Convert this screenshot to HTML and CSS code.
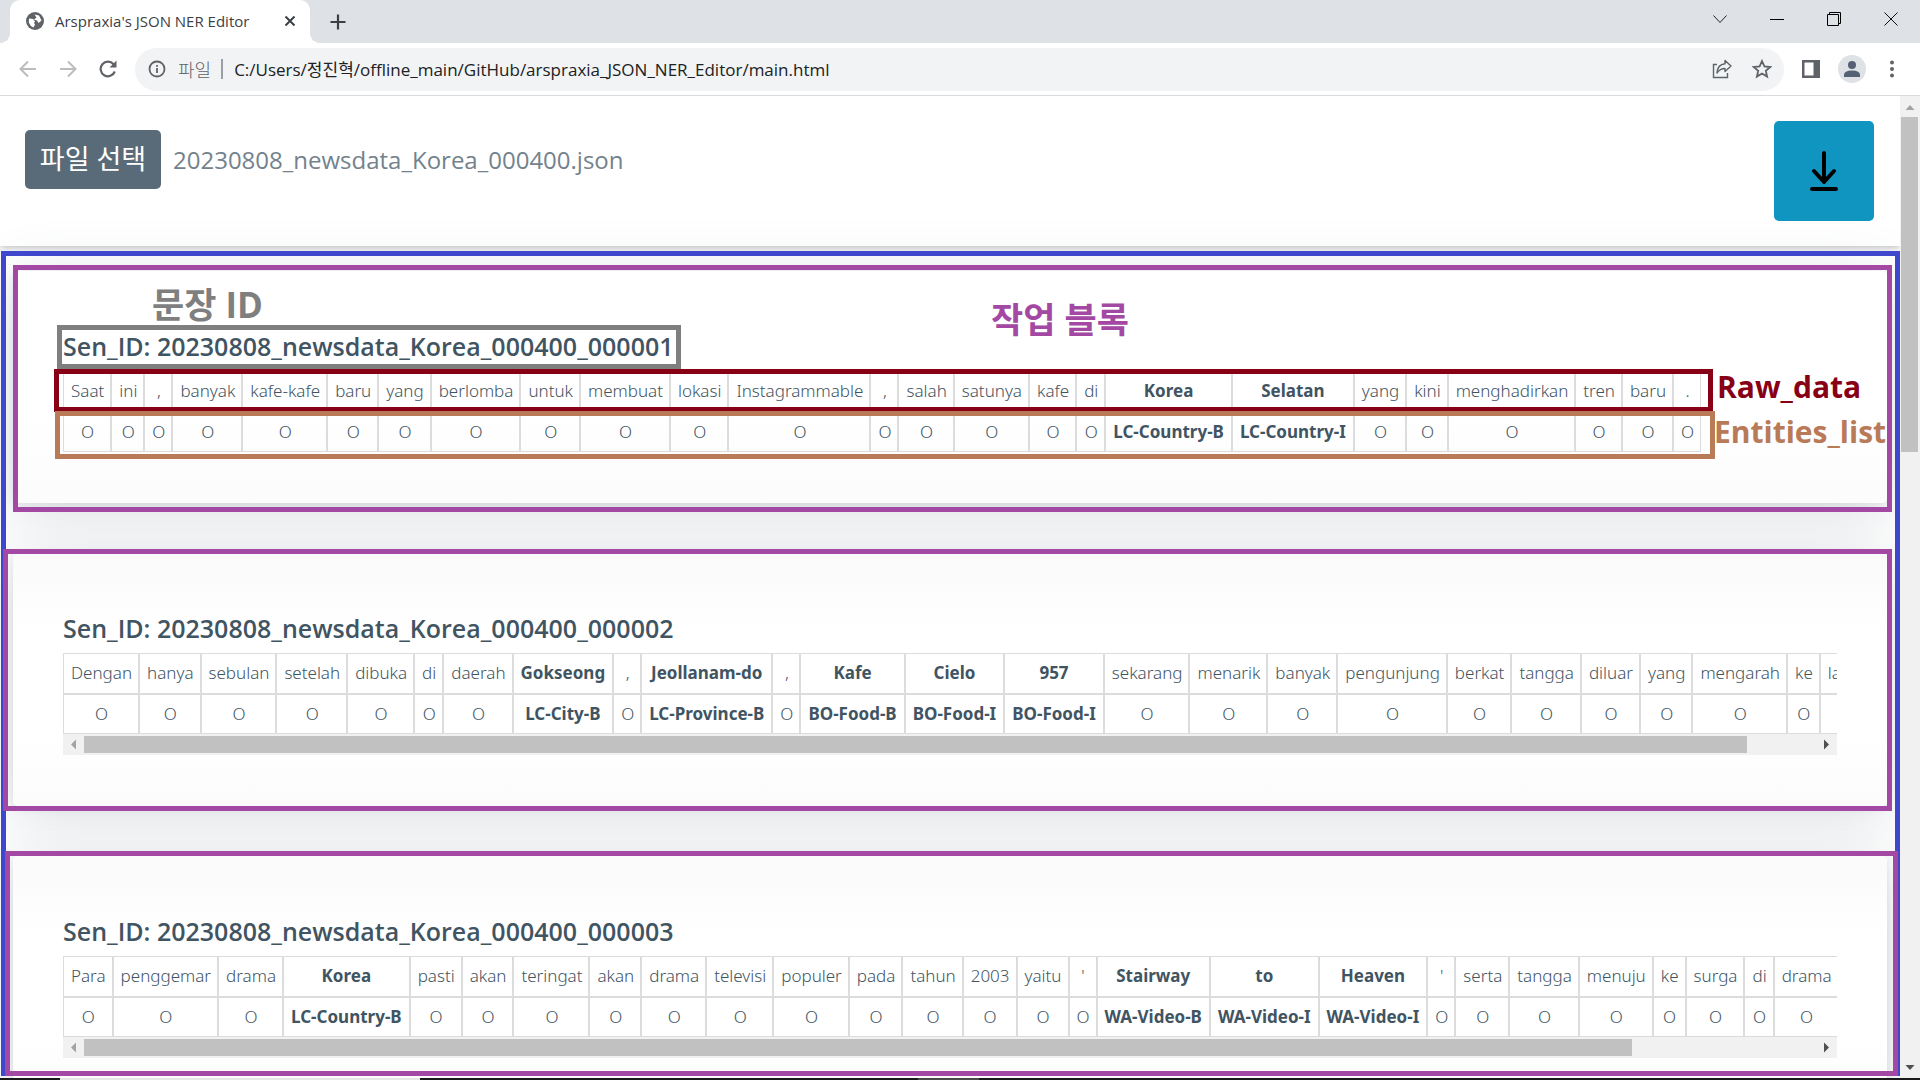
FILE: index.html
```html
<!DOCTYPE html>
<html lang="ko">
<head>
<meta charset="utf-8">
<title>Arspraxia's JSON NER Editor</title>
<link rel="stylesheet" href="styles.css">
</head>
<body>
<div class="tabstrip">
  <div class="tab">
    <svg class="globe" width="18" height="18" viewBox="0 0 18 18"><circle cx="9" cy="9" r="9" fill="#5f6368"/><path d="M3 6.500 L7 7 9 9.500 8 11 9 12.500 7.500 15.500 Q4 14 2.800 10.500Z M8.500 2.500 L13 3.500 15.500 8.500 12.500 11 11 8.500 8 7.500 10.500 5.500Z" fill="#fff"/></svg>
    <span class="tab-title">Arspraxia's JSON NER Editor</span>
    <button class="icon-btn" aria-label="Close tab"><svg width="12" height="12" viewBox="0 0 12 12"><path d="M1.500 1.500 L10.500 10.500 M10.500 1.500 L1.500 10.500" stroke="#3c4043" stroke-width="2" fill="none"/></svg></button>
  </div>
  <button class="icon-btn new-tab" aria-label="New tab"><svg width="16" height="16" viewBox="0 0 16 16"><path d="M8 0.500 V15.500 M0.500 8 H15.500" stroke="#3c4043" stroke-width="2.200"/></svg></button>
  <div class="window-controls">
    <button class="icon-btn" aria-label="Search tabs"><svg width="14" height="14" viewBox="0 0 14 14"><path d="M0.500 3.500 L7 10.500 13.500 3.500" stroke="#222" fill="none"/></svg></button>
    <button class="icon-btn" aria-label="Minimize"><svg width="14" height="14" viewBox="0 0 14 14"><path d="M0 7.500 H14" stroke="#000"/></svg></button>
    <button class="icon-btn" aria-label="Restore"><svg width="14" height="14" viewBox="0 0 14 14"><path d="M0.500 2.500 H11.500 V13.500 H0.500Z M2.500 2.500 V0.500 H13.500 V11.500 H11.500" stroke="#000" fill="none"/></svg></button>
    <button class="icon-btn" aria-label="Close"><svg width="14" height="14" viewBox="0 0 14 14"><path d="M0.500 0.500 L13.500 13.500 M13.500 0.500 L0.500 13.500" stroke="#111" fill="none"/></svg></button>
  </div>
</div>
<div class="toolbar">
  <div class="nav-buttons">
    <button class="icon-btn" aria-label="Back"><svg width="18" height="18" viewBox="0 0 18 18"><path d="M17 9 H2 M9 1.500 L1.500 9 9 16.500" stroke="#babcbe" stroke-width="2" fill="none"/></svg></button>
    <button class="icon-btn" aria-label="Forward"><svg width="18" height="18" viewBox="0 0 18 18"><path d="M1 9 H16 M9 1.500 L16.500 9 9 16.500" stroke="#babcbe" stroke-width="2" fill="none"/></svg></button>
    <button class="icon-btn" aria-label="Reload"><svg width="18" height="18" viewBox="0 0 18 18"><path d="M15.800 11.500 A7.300 7.300 0 1 1 14.600 4.300" stroke="#5f6368" stroke-width="2.200" fill="none"/><path d="M17.500 0.500 V7.500 H10.500Z" fill="#5f6368"/></svg></button>
  </div>
  <div class="omnibox">
    <svg width="18" height="18" viewBox="0 0 18 18"><circle cx="9" cy="9" r="7.500" stroke="#5f6368" stroke-width="1.800" fill="none"/><path d="M9 8 V13 M9 5 V6.800" stroke="#5f6368" stroke-width="1.800"/></svg>
    <span class="scheme">파일</span>
    <span class="divider"></span>
    <input class="url" aria-label="Address" value="C:/Users/정진혁/offline_main/GitHub/arspraxia_JSON_NER_Editor/main.html">
    <button class="icon-btn" aria-label="Share"><svg width="20" height="20" viewBox="0 0 20 20"><path d="M5 5.500 H1.500 V18.500 H15.500 V14" stroke="#5f6368" stroke-width="1.400" fill="none"/><path d="M13 1.500 L19 7 13 12.500 V9.500 Q8 9.500 5 14 Q5.500 5.500 13 4.800Z" stroke="#5f6368" stroke-width="1.400" fill="none" stroke-linejoin="round"/></svg></button>
    <button class="icon-btn" aria-label="Bookmark"><svg width="20" height="20" viewBox="0 0 20 20"><path d="M10 2 L12.400 7.400 18.200 8 13.800 11.800 15.100 17.600 10 14.500 4.900 17.600 6.200 11.800 1.800 8 7.600 7.400Z" stroke="#5f6368" stroke-width="1.800" fill="none"/></svg></button>
  </div>
  <div class="tool-buttons">
    <button class="icon-btn" aria-label="Side panel"><svg width="18" height="18" viewBox="0 0 18 18"><path d="M0 0 H18 V18 H0Z M2.500 2.500 V15.500 H11.500 V2.500Z" fill="#5f6368" fill-rule="evenodd"/></svg></button>
    <button class="icon-btn" aria-label="Profile"><svg width="28" height="28" viewBox="0 0 28 28"><circle cx="14" cy="14" r="14" fill="#dee1e6"/><circle cx="14" cy="10" r="4" fill="#566074"/><path d="M6 22 V20 Q6 15.500 14 15.500 T22 20 V22Z" fill="#566074"/></svg></button>
    <button class="icon-btn" aria-label="Menu"><svg width="4" height="18" viewBox="0 0 4 18"><circle cx="2" cy="2.500" r="2" fill="#5f6368"/><circle cx="2" cy="9" r="2" fill="#5f6368"/><circle cx="2" cy="15.500" r="2" fill="#5f6368"/></svg></button>
  </div>
</div>

<div class="viewport">
  <div class="page">
    <header class="page-header">
      <div class="file-row">
        <button class="file-btn">파일 선택</button>
        <span class="file-name">20230808_newsdata_Korea_000400.json</span>
      </div>
      <button class="download-btn" aria-label="Download"><svg width="28" height="40" viewBox="0 0 28 40"><path d="M14 2 V31 M4 20 L14 31 24 20 M2 38 H26" stroke="#000" stroke-width="4" fill="none" stroke-linecap="round" stroke-linejoin="round"/></svg></button>
    </header>
    <main class="blocks">
      <article class="card">
        <h2>Sen_ID: 20230808_newsdata_Korea_000400_000001</h2>
        <div class="scroller">
          <table>
            <tr><td>Saat</td><td>ini</td><td>,</td><td>banyak</td><td>kafe-kafe</td><td>baru</td><td>yang</td><td>berlomba</td><td>untuk</td><td>membuat</td><td>lokasi</td><td>Instagrammable</td><td>,</td><td>salah</td><td>satunya</td><td>kafe</td><td>di</td><th>Korea</th><th>Selatan</th><td>yang</td><td>kini</td><td>menghadirkan</td><td>tren</td><td>baru</td><td>.</td></tr>
            <tr><td>O</td><td>O</td><td>O</td><td>O</td><td>O</td><td>O</td><td>O</td><td>O</td><td>O</td><td>O</td><td>O</td><td>O</td><td>O</td><td>O</td><td>O</td><td>O</td><td>O</td><th>LC-Country-B</th><th>LC-Country-I</th><td>O</td><td>O</td><td>O</td><td>O</td><td>O</td><td>O</td></tr>
          </table>
        </div>
        <span class="note note-block">작업 블록</span>
        <span class="note note-id">문장 ID</span>
        <span class="note note-raw">Raw_data</span>
        <span class="note note-entities">Entities_list</span>
        <div class="frame frame-id"></div>
        <div class="frame frame-raw"></div>
        <div class="frame frame-entities"></div>
        <div class="frame frame-block first"></div>
      </article>
      <article class="card">
        <h2>Sen_ID: 20230808_newsdata_Korea_000400_000002</h2>
        <div class="scroller">
          <table>
            <tr><td>Dengan</td><td>hanya</td><td>sebulan</td><td>setelah</td><td>dibuka</td><td>di</td><td>daerah</td><th>Gokseong</th><td>,</td><th>Jeollanam-do</th><td>,</td><th>Kafe</th><th>Cielo</th><th>957</th><td>sekarang</td><td>menarik</td><td>banyak</td><td>pengunjung</td><td>berkat</td><td>tangga</td><td>diluar</td><td>yang</td><td>mengarah</td><td>ke</td><td>langit</td></tr>
            <tr><td>O</td><td>O</td><td>O</td><td>O</td><td>O</td><td>O</td><td>O</td><th>LC-City-B</th><td>O</td><th>LC-Province-B</th><td>O</td><th>BO-Food-B</th><th>BO-Food-I</th><th>BO-Food-I</th><td>O</td><td>O</td><td>O</td><td>O</td><td>O</td><td>O</td><td>O</td><td>O</td><td>O</td><td>O</td><td></td></tr>
          </table>
        </div>
        <div class="hscroll"><svg width="21" height="21" viewBox="0 0 21 21"><path d="M13 5.500 V15.500 L8 10.500Z" fill="#a3a3a3"/></svg><div class="track"><div class="thumb" style="width:96%"></div></div><svg width="21" height="21" viewBox="0 0 21 21"><path d="M8 5.500 V15.500 L13 10.500Z" fill="#505050"/></svg></div>
        <div class="frame frame-block second"></div>
      </article>
      <article class="card">
        <h2>Sen_ID: 20230808_newsdata_Korea_000400_000003</h2>
        <div class="scroller">
          <table>
            <tr><td>Para</td><td>penggemar</td><td>drama</td><th>Korea</th><td>pasti</td><td>akan</td><td>teringat</td><td>akan</td><td>drama</td><td>televisi</td><td>populer</td><td>pada</td><td>tahun</td><td>2003</td><td>yaitu</td><td>'</td><th>Stairway</th><th>to</th><th>Heaven</th><td>'</td><td>serta</td><td>tangga</td><td>menuju</td><td>ke</td><td>surga</td><td>di</td><td>drama</td></tr>
            <tr><td>O</td><td>O</td><td>O</td><th>LC-Country-B</th><td>O</td><td>O</td><td>O</td><td>O</td><td>O</td><td>O</td><td>O</td><td>O</td><td>O</td><td>O</td><td>O</td><td>O</td><th>WA-Video-B</th><th>WA-Video-I</th><th>WA-Video-I</th><td>O</td><td>O</td><td>O</td><td>O</td><td>O</td><td>O</td><td>O</td><td>O</td></tr>
          </table>
        </div>
        <div class="hscroll"><svg width="21" height="21" viewBox="0 0 21 21"><path d="M13 5.500 V15.500 L8 10.500Z" fill="#a3a3a3"/></svg><div class="track"><div class="thumb" style="width:89.400%"></div></div><svg width="21" height="21" viewBox="0 0 21 21"><path d="M8 5.500 V15.500 L13 10.500Z" fill="#505050"/></svg></div>
      </article>
    </main>
    <div class="frame frame-main"></div>
    <div class="frame frame-third"></div>
  </div>
  <div class="vscroll"><svg width="20" height="21" viewBox="0 0 20 21"><path d="M5.500 14 H14.500 L10 9Z" fill="#a3a3a3"/></svg><div class="track"><div class="thumb" style="height:35.600%"></div></div><svg width="20" height="21" viewBox="0 0 20 21"><path d="M5.500 8 H14.500 L10 13Z" fill="#505050"/></svg></div>
</div>
<div class="taskbar"><span class="task-active"></span><span class="task-open"></span></div>
</body>
</html>
```
FILE: styles.css
```css
* { box-sizing: border-box; }

body {
  margin: 0;
  height: 100vh;
  display: flex;
  flex-direction: column;
  overflow: hidden;
  background: #fff;
  color: #415462;
  font-family: "Open Sans", "Noto Sans CJK KR", sans-serif;
}

button { font: inherit; border: 0; padding: 0; }
.icon-btn { display: flex; background: none; }

/* Browser window */
.tabstrip {
  display: flex;
  height: 43px;
  padding-left: 10px;
  background: #dee1e6;
}
.tab {
  position: relative;
  display: flex;
  align-items: center;
  width: 300px;
  padding: 0 14px 2px 16px;
  background: #fff;
  border-radius: 10px 10px 0 0;
}
.tab::before,
.tab::after {
  content: "";
  position: absolute;
  bottom: 0;
  width: 10px;
  height: 10px;
}
.tab::before { right: 100%; background: radial-gradient(circle at 0 0, #dee1e6 10px, #fff 10px); }
.tab::after { left: 100%; background: radial-gradient(circle at 100% 0, #dee1e6 10px, #fff 10px); }
.tab-title { flex: 1; margin-left: 11px; font-size: 15px; color: #3c4043; white-space: nowrap; }
.new-tab { align-self: center; margin-left: 20px; }
.window-controls {
  display: flex;
  align-items: center;
  gap: 43px;
  margin-left: auto;
  padding: 0 22px 6px 0;
}
.toolbar {
  display: flex;
  align-items: center;
  height: 53px;
  padding: 0 26px 0 19px;
  border-bottom: 1px solid #d8dadd;
}
.nav-buttons { display: flex; gap: 22px; width: 116px; }
.omnibox {
  flex: 1;
  display: flex;
  align-items: center;
  height: 43px;
  padding: 0 12px 0 13px;
  border-radius: 22px;
  background: #f1f3f4;
  font-size: 17px;
}
.scheme { margin-left: 12px; font-size: 18px; font-weight: 300; color: #5f6368; }
.divider { width: 2px; height: 20px; margin: 0 11px 0 10px; background: #9aa0a6; }
.url {
  flex: 1;
  min-width: 0;
  padding: 0 0 2px;
  border: 0;
  background: none;
  font: inherit;
  color: #202124;
}
.omnibox .icon-btn { margin-left: 20px; }
.tool-buttons { display: flex; align-items: center; gap: 18px; margin-left: 18px; }
.tool-buttons .icon-btn:last-child { margin-left: 6px; }

/* Page area and its scrollbar */
.viewport { flex: 1; display: flex; min-height: 0; }
.page { position: relative; flex: 1; min-width: 0; overflow: hidden; }
.vscroll {
  display: flex;
  flex-direction: column;
  width: 20px;
  background: #f1f1f1;
}
.track { flex: 1; }
.thumb { background: #c1c1c1; }
.vscroll .thumb { margin: 0 2px 0 1px; }

.page-header {
  position: relative;
  display: flex;
  justify-content: space-between;
  align-items: flex-start;
  height: 150px;
  padding: 25px 26px 25px 25px;
  background: #fff;
  box-shadow: 0 2px 8px rgba(0, 0, 0, 0.25);
}
.file-row { display: flex; align-items: center; gap: 12px; height: 76px; }
.file-btn {
  width: 136px;
  height: 59px;
  border-radius: 5px;
  background: #596b78;
  color: #fff;
  font-size: 27px;
  line-height: 56px;
}
.file-name { font-size: 24px; color: #73828c; }
.download-btn {
  display: flex;
  align-items: center;
  justify-content: center;
  width: 100px;
  height: 100px;
  border-radius: 5px;
  background: #1095c1;
}

/* Sentence cards */
.blocks { display: grid; gap: 50px; padding: 25px 13px; }
.card {
  position: relative;
  min-width: 0;
  padding: 50px 50px 51px;
  border-radius: 5px;
  background: linear-gradient(#fafafb, #fff 80px, #fff 70%, #fcfcfd);
  box-shadow: 0 2px 8px rgba(65, 84, 98, 0.12), 0 8px 60px rgba(65, 84, 98, 0.2);
}
.card:first-child { background: linear-gradient(#fff 60%, #fcfcfd); }
.card h2 {
  margin: 0;
  padding: 6px 0;
  font-size: 25px;
  line-height: 38px;
  font-weight: 600;
}
.scroller { overflow: hidden; }
table { border-collapse: separate; border-spacing: 0; font-family: "Noto Sans", "Noto Sans CJK KR", sans-serif; }
td, th {
  height: 41px;
  padding: 0 6px 1px 7px;
  border: 1px solid #dcdcdc;
  font-size: 17px;
  line-height: 24px;
  text-align: center;
  white-space: nowrap;
}
tr:last-child > * { height: 40px; }
td { font-weight: 300; }
th { padding-right: 7px; font-weight: 700; }
.hscroll { display: flex; height: 21px; background: #f1f1f1; }
.hscroll .track { padding: 2px 0; }
.hscroll .thumb { height: 17px; }

/* Annotations drawn over the page */
.frame { position: absolute; border: 5px solid; pointer-events: none; }
.frame-main { inset: 155px 0 2px 1px; border-color: #3f48cc; }
.frame-block, .frame-third { border-color: #a349a4; }
.first { inset: -6px -5px -9px 0; }
.second { inset: -4px -5px -5px -10px; }
.frame-block { z-index: 1; }
.frame-third { inset: 755px 2px 2px 5px; }
.frame-id { top: 54px; left: 44px; width: 624px; height: 44px; border-color: #7f7f7f; }
.frame-raw { top: 98px; left: 41px; width: 1659px; height: 43px; border-color: #880015; }
.frame-entities { top: 140px; left: 42px; width: 1660px; height: 48px; border-color: #b97a57; }
.note { position: absolute; font-size: 30px; line-height: 40px; font-weight: 700; white-space: nowrap; }
.note-id, .note-block { font-size: 35px; }
.note-id { top: 14px; left: 139px; color: #7f7f7f; }
.note-block { top: 29px; left: 978px; color: #a349a4; }
.note-raw { top: 96px; left: 1704px; color: #880015; }
.note-entities { top: 141px; left: 1701px; color: #b97a57; }

.taskbar { display: flex; height: 2px; background: #1a1a1a; }
.task-active { width: 360px; margin-left: 60px; background: #e6e6e6; }
.task-open { width: 61px; margin-left: 498px; background: #4a4a4a; }
```
